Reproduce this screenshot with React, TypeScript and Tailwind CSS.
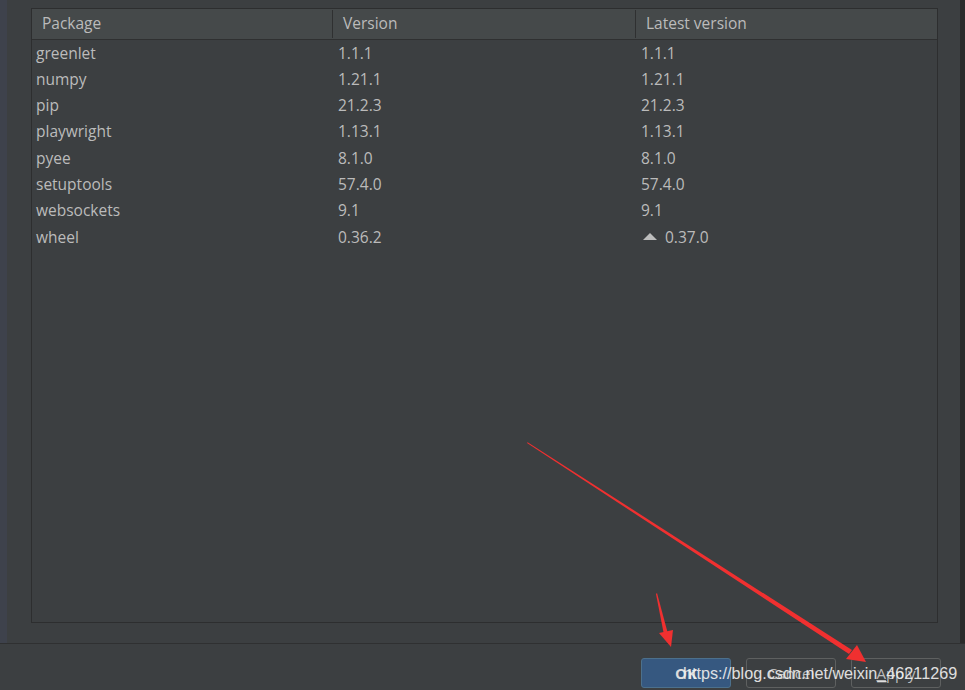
import React from "react";

const rows = [
  { name: "greenlet", version: "1.1.1", latest: "1.1.1" },
  { name: "numpy", version: "1.21.1", latest: "1.21.1" },
  { name: "pip", version: "21.2.3", latest: "21.2.3" },
  { name: "playwright", version: "1.13.1", latest: "1.13.1" },
  { name: "pyee", version: "8.1.0", latest: "8.1.0" },
  { name: "setuptools", version: "57.4.0", latest: "57.4.0" },
  { name: "websockets", version: "9.1", latest: "9.1" },
  { name: "wheel", version: "0.36.2", latest: "0.37.0", upgrade: true },
];

const font = { fontFamily: '"Segoe UI", "Open Sans", "Noto Sans", sans-serif' };

export default function App() {
  return (
    <div
      className="relative w-[965px] h-[690px] overflow-hidden bg-[#3c3f41] text-[#bbbbbb] flex flex-col"
      style={font}
    >
      {/* Dialog body */}
      <div className="flex h-[644px] border-b border-[#2f3031]">
        <div className="w-[7px] bg-[#3e424c]" />
        <div className="flex-1 pl-[24px] pt-[8px] pr-[22px] pb-[20px]">
          {/* Package table */}
          <div className="h-full border border-[#2d2e2f] flex flex-col">
            <div className="flex h-[31px] bg-[#45494a] border-b border-[#2f3031] text-[15.5px] items-center">
              <div className="w-[301px] h-[28px] flex items-center pl-[10px] border-r border-[#2f3031]">Package</div>
              <div className="w-[303px] h-[28px] flex items-center pl-[10px] border-r border-[#2f3031]">Version</div>
              <div className="flex-1 h-full flex items-center pl-[10px]">Latest version</div>
            </div>
            <div className="flex flex-col text-[15.5px]">
              {rows.map((r) => (
                <div key={r.name} className="flex h-[26.3px] items-center">
                  <div className="w-[301px] pl-[4px]">{r.name}</div>
                  <div className="w-[303px] pl-[5px]">{r.version}</div>
                  <div className="flex-1 pl-[5px] flex items-center">
                    {r.upgrade && (
                      <svg width="16" height="10" viewBox="0 0 16 10" className="mr-[7px] ml-[1px]">
                        <polygon points="8,1 15,8 1,8" fill="#bdbdbd" />
                      </svg>
                    )}
                    {r.latest}
                  </div>
                </div>
              ))}
            </div>
          </div>
        </div>
        <div className="w-[5px] bg-[#2b2b2b]" />
      </div>

      {/* Buttons */}
      <div className="flex-1 flex justify-end items-start pt-[14px] pr-[24px] gap-[15px] text-[15px]">
        <button className="w-[90px] h-[30px] rounded-[3px] bg-[#365880] border border-[#4c708c] text-[#dcdcdc] font-bold">
          OK
        </button>
        <button className="w-[90px] h-[30px] rounded-[3px] bg-[#3c3f41] border border-[#5e6060] text-[#bbbbbb]">
          Cancel
        </button>
        <button className="w-[90px] h-[30px] rounded-[3px] bg-[#3c3f41] border border-[#5e6060] text-[#bbbbbb]">
          <span className="underline">A</span>pply
        </button>
      </div>

      {/* Annotation arrows */}
      <svg className="absolute inset-0 pointer-events-none" width="965" height="690" viewBox="0 0 965 690">
        <polygon points="527,443 527.6,442.2 852,650 849,654" fill="#f03030" />
        <polygon points="846,659 857,645 866,662" fill="#f03030" />
        <polygon points="656,594 657,593 668,634 664,635" fill="#f03030" />
        <polygon points="659,633 673,630 671,647" fill="#f03030" />
      </svg>

      {/* Watermark */}
      <div
        className="absolute left-[683px] top-[661px] text-[16.2px] text-[#f0f0f0] opacity-90 whitespace-nowrap"
        style={{ fontFamily: '"Liberation Sans", Arial, sans-serif' }}
      >
        https://blog.csdn.net/weixin_46211269
      </div>
    </div>
  );
}
